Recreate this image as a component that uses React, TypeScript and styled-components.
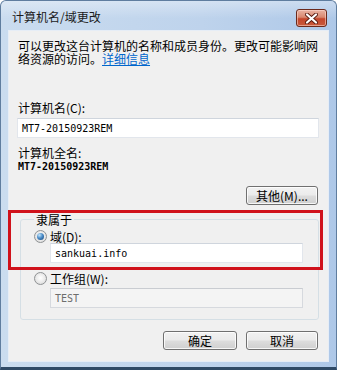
import React from "react";
import styled, { createGlobalStyle } from "styled-components";

const Global = createGlobalStyle`
  html, body { margin: 0; padding: 0; background: #ffffff; }
  body { font-family: "Noto Sans CJK SC", "Noto Sans", sans-serif; }
  * { box-sizing: border-box; }
`;

const UI = `"Noto Sans CJK SC", "Noto Sans", sans-serif`;
const MONO = `"DejaVu Sans Mono", "Liberation Mono", monospace`;

const Window = styled.div`
  width: 337px;
  height: 370px;
  display: flex;
  flex-direction: column;
  background: linear-gradient(to right, #cadcef 0%, #bed3ec 60%, #aec8e8 100%);
  border: 1px solid #5f7d9f;
  border-bottom: 3px solid #2f4a66;
  border-radius: 6px 6px 0 0;
  overflow: hidden;
`;

const TitleBar = styled.div`
  height: 29px;
  display: flex;
  align-items: center;
  justify-content: space-between;
  padding: 0 9px 0 11px;
  background: linear-gradient(to bottom, rgba(255,255,255,0.35), rgba(255,255,255,0) 60%);
`;

const Title = styled.span`
  font-family: ${UI};
  font-size: 12px;
  line-height: 13px;
  color: #1b1b1b;
  margin-top: 1px;
`;

const CloseButton = styled.div`
  width: 31px;
  height: 18px;
  margin-top: 8px;
  align-self: flex-start;
  border: 1px solid #6b2a1c;
  border-radius: 3px;
  background: linear-gradient(to bottom, #e9b3a3 0%, #d98870 45%, #c4462c 55%, #c85a3c 100%);
  box-shadow: inset 0 0 0 1px rgba(255, 220, 210, 0.55);
  display: flex;
  align-items: center;
  justify-content: center;
`;

const Client = styled.div`
  flex: 1;
  margin: 0 7px 5px 7px;
  background: #f0f0f0;
  border: 1px solid #e6edf6;
  padding: 8px 9px 0 8px;
  display: flex;
  flex-direction: column;
`;

const Intro = styled.p`
  margin: 0 0 0 1px;
  width: 304px;
  font-family: ${UI};
  font-size: 12px;
  line-height: 13px;
  color: #000;
`;

const Link = styled.a`
  color: #0066cc;
  text-decoration: underline;
  cursor: pointer;
`;

const FieldLabel = styled.div<{ $top: number }>`
  margin: ${(p) => p.$top}px 0 0 1px;
  font-family: ${UI};
  font-size: 12px;
  line-height: 13px;
  color: #000;
`;

const TextBox = styled.div<{ $disabled?: boolean; $top?: number; $indent?: number; $width?: number }>`
  margin-top: ${(p) => p.$top ?? 0}px;
  margin-left: ${(p) => p.$indent ?? 0}px;
  width: ${(p) => (p.$width ? `${p.$width}px` : "auto")};
  height: 20px;
  display: flex;
  align-items: center;
  padding-left: 4px;
  background: ${(p) => (p.$disabled ? "#f4f4f4" : "#ffffff")};
  border: 1px solid ${(p) => (p.$disabled ? "#d6d9de" : "#e2e6ec")};
  border-top-color: ${(p) => (p.$disabled ? "#c9ccd1" : "#cfd5dd")};
  font-family: ${MONO};
  font-size: 10px;
  color: ${(p) => (p.$disabled ? "#6d6d6d" : "#000")};
`;

const MonoValue = styled.div`
  margin: 2px 0 0 1px;
  font-family: ${MONO};
  font-size: 10px;
  line-height: 12px;
  font-weight: bold;
  color: #000;
`;

const ButtonRow = styled.div<{ $top: number }>`
  margin-top: ${(p) => p.$top}px;
  display: flex;
  justify-content: flex-end;
  gap: 9px;
  padding-right: 1px;
`;

const PushButton = styled.button<{ $width: number }>`
  width: ${(p) => p.$width}px;
  height: 19px;
  padding: 0;
  border: 1px solid #707070;
  border-radius: 3px;
  background: linear-gradient(to bottom, #f2f2f2 0%, #ebebeb 48%, #dddddd 52%, #cfcfcf 100%);
  box-shadow: inset 0 0 0 1px rgba(255, 255, 255, 0.8);
  font-family: ${UI};
  font-size: 12px;
  line-height: 13px;
  color: #000;
  display: flex;
  align-items: center;
  justify-content: center;
`;

const GroupWrap = styled.div`
  position: relative;
  margin: 8px 0 0 3px;
`;

const GroupBox = styled.fieldset`
  margin: 0;
  padding: 3px 14px 11px 13px;
  border: 1px solid #d5dfe5;
  border-radius: 3px;
  min-width: 0;
`;

const Legend = styled.legend`
  padding: 0 2px;
  margin-left: 0;
  font-family: ${UI};
  font-size: 12px;
  line-height: 13px;
  color: #000;
`;

const RadioRow = styled.label<{ $top: number }>`
  margin-top: ${(p) => p.$top}px;
  display: flex;
  align-items: center;
  gap: 3px;
  font-family: ${UI};
  font-size: 12px;
  line-height: 13px;
  color: #000;
`;

const RadioDot = styled.span<{ $checked?: boolean }>`
  width: 13px;
  height: 13px;
  border-radius: 50%;
  border: 1px solid #8f9294;
  background: radial-gradient(circle at 50% 45%, #ffffff 0%, #e9e9e9 55%, #cfcfcf 100%);
  display: flex;
  align-items: center;
  justify-content: center;
  &::after {
    content: "";
    display: ${(p) => (p.$checked ? "block" : "none")};
    width: 7px;
    height: 7px;
    border-radius: 50%;
    background: radial-gradient(circle at 35% 30%, #c5e6fb 0%, #4c8dc9 45%, #123f73 100%);
  }
`;

const Highlight = styled.div`
  position: absolute;
  left: -12px;
  top: -3px;
  width: 315px;
  height: 60px;
  border: 3px solid #d0121b;
  pointer-events: none;
`;

export default function App() {
  return (
    <>
      <Global />
      <Window>
        <TitleBar>
          <Title>计算机名/域更改</Title>
          <CloseButton>
            <svg width="13" height="11" viewBox="0 0 13 11">
              <path d="M2 1.5 L11 9.5 M11 1.5 L2 9.5" stroke="#5a1d12" strokeWidth="4" strokeLinecap="round" />
              <path d="M2 1.5 L11 9.5 M11 1.5 L2 9.5" stroke="#ffffff" strokeWidth="2.2" strokeLinecap="round" />
            </svg>
          </CloseButton>
        </TitleBar>
        <Client>
          <Intro>
            可以更改这台计算机的名称和成员身份。更改可能影响网络资源的访问。<Link>详细信息</Link>
          </Intro>
          <FieldLabel $top={36}>计算机名(C):</FieldLabel>
          <TextBox $top={4}>MT7-20150923REM</TextBox>
          <FieldLabel $top={8}>计算机全名:</FieldLabel>
          <MonoValue>MT7-20150923REM</MonoValue>
          <ButtonRow $top={13}>
            <PushButton $width={72}>其他(M)...</PushButton>
          </ButtonRow>
          <GroupWrap>
            <Highlight />
            <GroupBox>
              <Legend>隶属于</Legend>
              <RadioRow $top={1}>
                <RadioDot $checked />
                域(D):
              </RadioRow>
              <TextBox $indent={16} $width={253}>sankuai.info</TextBox>
              <RadioRow $top={9}>
                <RadioDot />
                工作组(W):
              </RadioRow>
              <TextBox $indent={16} $width={253} $top={3} $disabled>TEST</TextBox>
            </GroupBox>
          </GroupWrap>
          <ButtonRow $top={11}>
            <PushButton $width={74}>确定</PushButton>
            <PushButton $width={72}>取消</PushButton>
          </ButtonRow>
        </Client>
      </Window>
    </>
  );
}
